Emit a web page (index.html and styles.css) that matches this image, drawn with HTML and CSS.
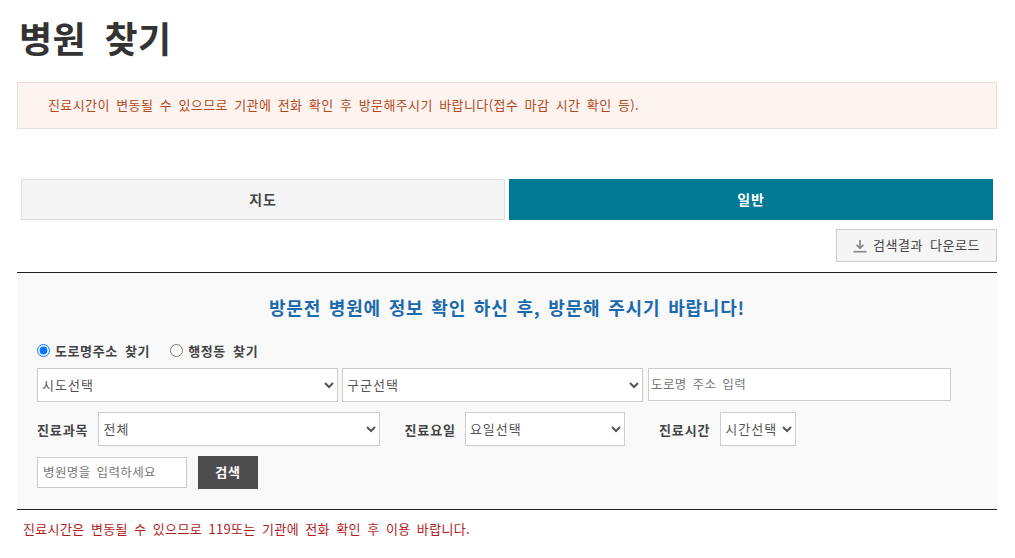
FILE: index.html
```html
<!DOCTYPE html>
<html lang="ko">
<head>
<meta charset="utf-8">
<title>병원 찾기</title>
<link rel="stylesheet" href="styles.css">
</head>
<body>
<main class="page">
  <h1 class="title">병원 찾기</h1>
  <p class="alert">진료시간이 변동될 수 있으므로 기관에 전화 확인 후 방문해주시기 바랍니다(접수 마감 시간 확인 등).</p>
  <div class="tabs">
    <a class="tab" href="#">지도</a>
    <a class="tab tab-active" href="#">일반</a>
  </div>
  <div class="tools">
    <button class="download" type="button">
      <svg class="download-icon" viewBox="0 0 14 14" width="14" height="14" aria-hidden="true">
        <path d="M7 1V9M3.6 5.8 7 9.2 10.4 5.8" fill="none" stroke="#888" stroke-width="1.7"/>
        <path d="M0.5 12.7h13" fill="none" stroke="#888" stroke-width="1.6"/>
      </svg>
      <span>검색결과 다운로드</span>
    </button>
  </div>
  <section class="panel">
    <h2 class="panel-title">방문전 병원에 정보 확인 하신 후, 방문해 주시기 바랍니다!</h2>
    <div class="radios">
      <label class="radio"><input type="radio" name="addr" checked>도로명주소 찾기</label>
      <label class="radio"><input type="radio" name="addr">행정동 찾기</label>
    </div>
    <div class="row row-addr">
      <select class="field sel-city"><option>시도선택</option></select>
      <select class="field sel-city"><option>구군선택</option></select>
      <input class="field input-road" type="text" placeholder="도로명 주소 입력">
    </div>
    <div class="row row-filter">
      <label class="filter-label">진료과목</label>
      <select class="field sel-dept"><option>전체</option></select>
      <label class="filter-label label-day">진료요일</label>
      <select class="field sel-day"><option>요일선택</option></select>
      <label class="filter-label label-time">진료시간</label>
      <select class="field sel-time"><option>시간선택</option></select>
    </div>
    <div class="row row-search">
      <input class="field input-name" type="text" placeholder="병원명을 입력하세요">
      <button class="search" type="button">검색</button>
    </div>
  </section>
  <p class="notice">진료시간은 변동될 수 있으므로 119또는 기관에 전화 확인 후 이용 바랍니다.</p>
</main>
</body>
</html>
```
FILE: styles.css
```css
* { box-sizing: border-box; }
html, body { margin: 0; background: #fff; }
body {
  font-family: "Noto Sans CJK KR", "Noto Sans", "Liberation Sans", sans-serif;
  color: #333;
  font-size: 13px;
  letter-spacing: 0.4px;
  word-spacing: 2.35px;
}
.page { width: 980px; margin-left: 17px; height: 558px; overflow: hidden; }
.title {
  margin: 0;
  padding: 12px 0 0 2px;
  height: 82px;
  font-size: 36px;
  line-height: 50px;
  font-weight: 700;
  letter-spacing: 0.4px;
  word-spacing: 8px;
  color: #333;
}
.alert {
  margin: 0;
  height: 47px;
  padding: 0 30px;
  line-height: 43px;
  background: #fdf4f0;
  border: 1px solid #e6e0dd;
  color: #b5481c;
}
.tabs {
  display: flex;
  gap: 4px;
  margin: 50px 4px 0;
}
.tab {
  flex: 1;
  height: 41px;
  line-height: 38px;
  text-align: center;
  text-decoration: none;
  font-size: 14px;
  font-weight: 700;
  letter-spacing: 0.9px;
  color: #444;
  background: #f5f5f5;
  border: 1px solid #ddd;
}
.tab-active { background: #007a94; border-color: #007a94; color: #fff; }
.tools { display: flex; justify-content: flex-end; margin-top: 9px; }
.download {
  display: flex;
  align-items: center;
  justify-content: center;
  gap: 6px;
  width: 161px;
  height: 33px;
  padding: 0 0 3px;
  font: inherit;
  letter-spacing: 0.5px;
  word-spacing: 3px;
  color: #444;
  background: #f5f5f5;
  border: 1px solid #ccc;
}
.download-icon { margin-top: 3px; }
.panel {
  margin-top: 10px;
  height: 238px;
  padding: 0 20px;
  background: #f9f9f9;
  border-top: 1px solid #222;
  border-bottom: 1px solid #222;
}
.panel-title {
  margin: 0;
  padding-top: 21px;
  height: 65px;
  line-height: 26px;
  text-align: center;
  font-size: 18px;
  font-weight: 700;
  letter-spacing: 0.8px;
  word-spacing: 2px;
  color: #1c6aae;
}
.radios { display: flex; gap: 20px; height: 24px; align-items: center; }
.radio { display: flex; align-items: center; gap: 5px; font-weight: 700; letter-spacing: 0.6px; word-spacing: 3px; color: #444; }
.radio input { margin: 0; width: 13px; height: 13px; }
.row { display: flex; align-items: center; }
.field {
  height: 34px;
  padding: 0 0 2px;
  font-family: inherit;
  font-size: 13px;
  letter-spacing: 1px;
  color: #555;
  background: #fff;
  border: 1px solid #ccc;
  border-radius: 0;
}
input.field { letter-spacing: 0.4px; word-spacing: 2px; font-size: 12.5px; }
.field::placeholder { color: #777; opacity: 1; }
.row-addr { margin-top: 6px; gap: 4px; }
.sel-city { width: 301px; }
.input-road { width: 303px; height: 33px; padding-left: 2px; margin: 0 0 1px 1px; }
.row-filter { margin-top: 10px; }
.filter-label { font-weight: 700; letter-spacing: 0.9px; word-spacing: 0; color: #444; white-space: nowrap; }
.sel-dept { width: 282px; margin-left: 10px; }
.label-day { margin-left: 24px; }
.sel-day { width: 160px; margin-left: 9px; }
.label-time { margin-left: 34px; }
.sel-time { width: 76px; margin-left: 10px; }
.row-search { margin-top: 10px; gap: 11px; }
.input-name { width: 150px; height: 31px; padding-left: 5px; }
.search {
  width: 60px;
  height: 33px;
  padding: 0 0 2px;
  border: 0;
  background: #4d4d4d;
  color: #fff;
  font: 700 13px "Noto Sans CJK KR", sans-serif;
  letter-spacing: 0.8px;
}
.notice { margin: 10px 0 0 6px; line-height: 18px; letter-spacing: 0.35px; color: #b01c1c; }
```
